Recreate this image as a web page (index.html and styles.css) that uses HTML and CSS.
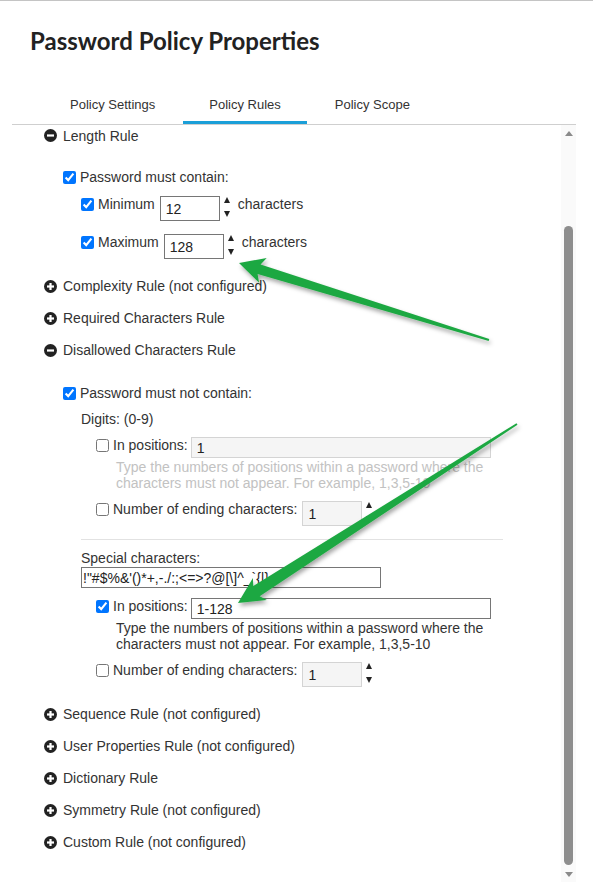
FILE: index.html
```html
<!DOCTYPE html>
<html>
<head>
<meta charset="utf-8">
<title>Password Policy Properties</title>
<link rel="stylesheet" href="styles.css">
</head>
<body>
<div class="page">
  <h1 class="title">Password Policy Properties</h1>
  <nav class="tabs">
    <div class="tab">Policy Settings</div>
    <div class="tab active">Policy Rules</div>
    <div class="tab">Policy Scope</div>
  </nav>
  <div class="panel">
    <div class="content">
      <div class="rule first">
        <svg class="icon" viewBox="0 0 13 13"><circle cx="6.5" cy="6.5" r="6.5" fill="#222"/><rect x="3" y="5.4" width="7" height="2.2" fill="#fff"/></svg>
        <span>Length Rule</span>
      </div>
      <div class="body len-body">
        <div class="line mt23"><input type="checkbox" checked><span>Password must contain:</span></div>
        <div class="sub">
          <div class="line mt11"><input type="checkbox" checked><span>Minimum</span><input class="num" type="text" value="12"><span class="spin"><i class="up"></i><i class="down"></i></span><span class="unit">characters</span></div>
          <div class="line mt13"><input type="checkbox" checked><span>Maximum</span><input class="num" type="text" value="128"><span class="spin"><i class="up"></i><i class="down"></i></span><span class="unit">characters</span></div>
        </div>
      </div>
      <div class="rule">
        <svg class="icon" viewBox="0 0 13 13"><circle cx="6.5" cy="6.5" r="6.5" fill="#222"/><rect x="3" y="5.4" width="7" height="2.2" fill="#fff"/><rect x="5.4" y="3" width="2.2" height="7" fill="#fff"/></svg>
        <span>Complexity Rule (not configured)</span>
      </div>
      <div class="rule">
        <svg class="icon" viewBox="0 0 13 13"><circle cx="6.5" cy="6.5" r="6.5" fill="#222"/><rect x="3" y="5.4" width="7" height="2.2" fill="#fff"/><rect x="5.4" y="3" width="2.2" height="7" fill="#fff"/></svg>
        <span>Required Characters Rule</span>
      </div>
      <div class="rule">
        <svg class="icon" viewBox="0 0 13 13"><circle cx="6.5" cy="6.5" r="6.5" fill="#222"/><rect x="3" y="5.4" width="7" height="2.2" fill="#fff"/></svg>
        <span>Disallowed Characters Rule</span>
      </div>
      <div class="body dis-body">
        <div class="line mt19"><input type="checkbox" checked><span>Password must not contain:</span></div>
        <div class="group">
          <div class="label mt10">Digits: (0-9)</div>
          <div class="opts">
            <div class="line mt10"><input type="checkbox"><span>In positions:</span><input class="txt off" type="text" value="1"></div>
            <div class="hint muted">Type the numbers of positions within a password where the<br>characters must not appear. For example, 1,3,5-10</div>
            <div class="line mt10"><input type="checkbox"><span>Number of ending characters:</span><input class="num off" type="text" value="1"><span class="spin"><i class="up"></i><i class="down"></i></span></div>
          </div>
          <div class="sep"></div>
          <div class="label mt10">Special characters:</div>
          <input class="chars" type="text" value="!&quot;#$%&amp;'()*+,-./:;&lt;=&gt;?@[\]^_`{|}~">
          <div class="opts">
            <div class="line mt10"><input type="checkbox" checked><span>In positions:</span><input class="txt" type="text" value="1-128"></div>
            <div class="hint">Type the numbers of positions within a password where the<br>characters must not appear. For example, 1,3,5-10</div>
            <div class="line mt10"><input type="checkbox"><span>Number of ending characters:</span><input class="num off" type="text" value="1"><span class="spin"><i class="up"></i><i class="down"></i></span></div>
          </div>
        </div>
      </div>
      <div class="rule">
        <svg class="icon" viewBox="0 0 13 13"><circle cx="6.5" cy="6.5" r="6.5" fill="#222"/><rect x="3" y="5.4" width="7" height="2.2" fill="#fff"/><rect x="5.4" y="3" width="2.2" height="7" fill="#fff"/></svg>
        <span>Sequence Rule (not configured)</span>
      </div>
      <div class="rule">
        <svg class="icon" viewBox="0 0 13 13"><circle cx="6.5" cy="6.5" r="6.5" fill="#222"/><rect x="3" y="5.4" width="7" height="2.2" fill="#fff"/><rect x="5.4" y="3" width="2.2" height="7" fill="#fff"/></svg>
        <span>User Properties Rule (not configured)</span>
      </div>
      <div class="rule">
        <svg class="icon" viewBox="0 0 13 13"><circle cx="6.5" cy="6.5" r="6.5" fill="#222"/><rect x="3" y="5.4" width="7" height="2.2" fill="#fff"/><rect x="5.4" y="3" width="2.2" height="7" fill="#fff"/></svg>
        <span>Dictionary Rule</span>
      </div>
      <div class="rule">
        <svg class="icon" viewBox="0 0 13 13"><circle cx="6.5" cy="6.5" r="6.5" fill="#222"/><rect x="3" y="5.4" width="7" height="2.2" fill="#fff"/><rect x="5.4" y="3" width="2.2" height="7" fill="#fff"/></svg>
        <span>Symmetry Rule (not configured)</span>
      </div>
      <div class="rule">
        <svg class="icon" viewBox="0 0 13 13"><circle cx="6.5" cy="6.5" r="6.5" fill="#222"/><rect x="3" y="5.4" width="7" height="2.2" fill="#fff"/><rect x="5.4" y="3" width="2.2" height="7" fill="#fff"/></svg>
        <span>Custom Rule (not configured)</span>
      </div>
    </div>
    <div class="scrollbar">
      <div class="sb-up"></div>
      <div class="sb-track"><div class="sb-thumb"></div></div>
      <div class="sb-down"></div>
    </div>
  </div>
  <svg class="overlay" width="593" height="882" viewBox="0 0 593 882">
    <defs>
      <filter id="sh" x="-20%" y="-20%" width="140%" height="140%">
        <feDropShadow dx="1.5" dy="3" stdDeviation="2" flood-color="#000" flood-opacity="0.35"/>
      </filter>
    </defs>
    <polygon filter="url(#sh)" fill="#1fa843" points="239,262 266.7,257 260.6,263.4 489.3,338 488.7,340 257.6,273 259.1,281.8"/>
    <polygon filter="url(#sh)" fill="#1fa843" points="238,602 266.9,598.9 259.7,595.2 517.5,423.8 516.5,422.2 253.3,585 252.9,577.1"/>
  </svg>
</div>
</body>
</html>
```

FILE: styles.css
```css
* { box-sizing: border-box; }

body {
  margin: 0;
  background: #fff;
  font-family: "Liberation Sans", Arial, sans-serif;
  color: #333;
  overflow: hidden;
}

.page {
  position: relative;
  width: 593px;
  height: 882px;
  border-top: 1px solid #c4c4c4;
  overflow: hidden;
}

.title {
  margin: 0;
  padding: 25px 0 0 30px;
  height: 85px;
  font-family: Lato, "Liberation Sans", sans-serif;
  font-weight: 700;
  font-size: 24px;
  line-height: 30px;
  color: #222;
}

.tabs {
  display: flex;
  gap: 2px;
  margin-left: 44px;
  height: 38px;
}

.tab {
  padding: 11px 26px 0;
  font-size: 13px;
  line-height: 16px;
  color: #333;
  border-bottom: 3px solid transparent;
}

.tab.active { border-bottom-color: #1b9fd8; }

.panel {
  display: flex;
  margin-left: 12px;
  width: 564px;
  height: 758px;
  border-top: 1px solid #cfcfcf;
}

.content {
  flex: 1;
  padding-left: 32px;
  font-size: 14px;
  overflow: hidden;
}

.rule {
  display: flex;
  align-items: center;
  gap: 6px;
  height: 32px;
}

.rule.first { height: 21px; }

.icon { width: 13px; height: 13px; flex: none; }

.body { padding-left: 19px; padding-bottom: 11px; }

.line {
  display: flex;
  align-items: flex-start;
  line-height: 16px;
  white-space: nowrap;
}

.line input[type=checkbox] {
  margin: 1.5px 4px 0 0;
  width: 13px;
  height: 13px;
  flex: none;
}

.sub { padding-left: 18px; }
.group { padding-left: 18px; }
.opts { padding-left: 15px; }

.label { line-height: 16px; }

.mt10 { margin-top: 10px; }
.mt11 { margin-top: 11px; }
.mt13 { margin-top: 13px; }
.mt19 { margin-top: 19px; }
.mt23 { margin-top: 23px; }

.num, .txt, .chars {
  font-family: "Liberation Sans", Arial, sans-serif;
  font-size: 14px;
  color: #222;
  border: 1px solid #767676;
  background: #fff;
  margin: 0;
  outline: none;
}

.num {
  width: 60px;
  height: 25px;
  margin-left: 5px;
  padding: 0 5px;
}

.txt {
  width: 300px;
  height: 21px;
  margin-left: 3px;
  padding: 0 5px;
}

.chars {
  display: block;
  width: 300px;
  height: 21px;
  margin-top: 1px;
  padding: 0 1px;
}

.num.off, .txt.off {
  background: #f5f5f5;
  border-color: #d4d4d4;
}

.spin {
  display: flex;
  flex-direction: column;
  gap: 8px;
  margin: 1px 0 0 4px;
}

.up, .down {
  display: block;
  width: 0;
  height: 0;
  border-left: 3.5px solid transparent;
  border-right: 3.5px solid transparent;
}

.up { border-bottom: 6px solid #222; }
.down { border-top: 6px solid #222; }

.unit { margin-left: 8px; }

.hint {
  margin-top: 1px;
  margin-left: 20px;
  line-height: 16px;
  color: #333;
}

.hint.muted { color: #c2c2c2; }

.sep {
  margin-top: 13px;
  width: 422px;
  height: 1px;
  background: #e2e2e2;
}

.scrollbar {
  width: 15px;
  flex: none;
  display: flex;
  flex-direction: column;
  background: #fafafa;
}

.sb-up, .sb-down {
  height: 16px;
  display: flex;
  align-items: center;
  justify-content: center;
}

.sb-up::before {
  content: "";
  border-left: 4px solid transparent;
  border-right: 4px solid transparent;
  border-bottom: 5px solid #8a8a8a;
}

.sb-down::before {
  content: "";
  border-left: 4px solid transparent;
  border-right: 4px solid transparent;
  border-top: 5px solid #8a8a8a;
}

.sb-track {
  flex: 1;
  padding: 85px 3px 0;
}

.sb-thumb {
  width: 9px;
  height: 639px;
  border-radius: 5px;
  background: #8e8e8e;
}

.overlay {
  position: absolute;
  top: 0;
  left: 0;
  pointer-events: none;
}
```
